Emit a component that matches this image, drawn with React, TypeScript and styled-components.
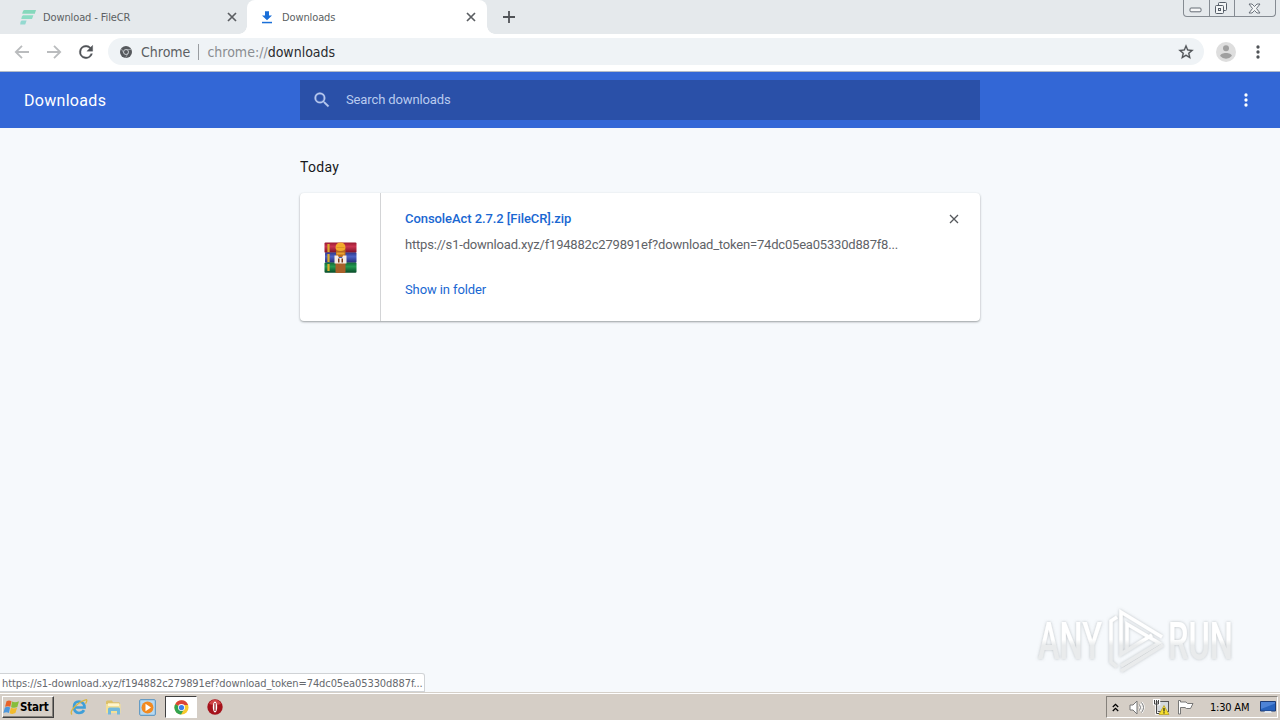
import React from "react";
import styled, { createGlobalStyle } from "styled-components";

const GlobalStyle = createGlobalStyle`
  * {
    box-sizing: border-box;
  }

  body {
    margin: 0;
    overflow: hidden;
    font-family: Roboto, "Liberation Sans", sans-serif;
  }

  svg {
    display: block;
    flex-shrink: 0;
  }
`;

const chromeFont = `"DejaVu Sans Condensed", "DejaVu Sans", sans-serif`;

interface CrossProps {
  size: number;
  weight: number;
  color: string;
}

const Cross: React.FC<CrossProps> = ({ size, weight, color }) => (
  <svg width={size} height={size} viewBox="0 0 10 10">
    <path d="M1 1L9 9M9 1L1 9" stroke={color} strokeWidth={weight} />
  </svg>
);

const Dots: React.FC<{ color: string; size: number }> = ({ color, size }) => (
  <svg width={size} height={size} viewBox="0 0 24 24" fill={color}>
    <circle cx="12" cy="6" r="2" />
    <circle cx="12" cy="12" r="2" />
    <circle cx="12" cy="18" r="2" />
  </svg>
);

const FileCrIcon = () => (
  <svg width="17" height="17" viewBox="0 0 17 17">
    <path d="M4.5 1H16l-1.2 3.8H2.2Q2.8 1.3 4.5 1z" fill="#86d8bc" />
    <path d="M3 6.2h10.4L12 10H1.3Q1.6 7 3 6.2z" fill="#8cdcc4" />
    <path d="M1.6 11.4h5L5.2 15.4H.2Q.2 12 1.6 11.4z" fill="#94d9d0" />
  </svg>
);

const DownloadIcon = () => (
  <svg width="12" height="13" viewBox="0 0 12 13" fill="#1a6fd8">
    <path d="M4 .3h4v4.3h3L6 9.3 1 4.6h3z" />
    <path d="M1 10.8h10v1.5H1z" />
  </svg>
);

const ArrowIcon: React.FC<{ flip?: boolean }> = ({ flip }) => (
  <svg width="16" height="16" viewBox="0 0 16 16">
    <path
      d="M15 8H2M8 1.8L1.8 8L8 14.2"
      fill="none"
      stroke="#babcbe"
      strokeWidth="1.8"
      transform={flip ? "rotate(180 8 8)" : undefined}
    />
  </svg>
);

const ReloadIcon = () => (
  <svg width="20" height="20" viewBox="0 0 24 24" fill="#505357" stroke="#505357" strokeWidth=".4">
    <path d="M17.65 6.35A7.96 7.96 0 0 0 12 4a8 8 0 1 0 7.73 10h-2.08A6 6 0 1 1 12 6c1.66 0 3.14.69 4.22 1.78L13 11h7V4l-2.35 2.35z" />
  </svg>
);

const PageIcon = () => (
  <svg width="12" height="12" viewBox="0 0 12 12">
    <circle cx="6" cy="6" r="6" fill="#56595d" />
    <circle cx="6" cy="6" r="2.5" fill="none" stroke="#d4d8dc" strokeWidth=".9" />
    <path d="M6 3.5h5.2M3.9 7.2L1.4 3M8.1 7.2l-2.5 4.5" stroke="#c4c8cc" strokeWidth=".6" />
  </svg>
);

const StarIcon = () => (
  <svg width="18" height="18" viewBox="0 0 24 24" fill="#4f5256" stroke="#4f5256" strokeWidth=".3">
    <path d="M22 9.24l-7.19-.62L12 2 9.19 8.63 2 9.24l5.46 4.73L5.82 21 12 17.27 18.18 21l-1.63-7.03L22 9.24zM12 15.4l-3.76 2.27 1-4.28-3.32-2.88 4.38-.38L12 6.1l1.71 4.04 4.38.38-3.32 2.88 1 4.28L12 15.4z" />
  </svg>
);

const AvatarIcon = () => (
  <svg width="20" height="20" viewBox="0 0 20 20">
    <circle cx="10" cy="10" r="10" fill="#dedede" />
    <circle cx="10" cy="6.3" r="3" fill="#a0a0a0" />
    <path d="M4.2 14c0-4 11.6-4 11.6 0q-2.4 2.8-5.8 2.8T4.2 14z" fill="#a0a0a0" />
  </svg>
);

const SearchIcon = () => (
  <svg width="20" height="20" viewBox="0 0 24 24" fill="#b6c8ee" stroke="#b6c8ee" strokeWidth=".3">
    <path d="M15.5 14h-.79l-.28-.27A6.47 6.47 0 0 0 16 9.5 6.5 6.5 0 1 0 9.5 16c1.61 0 3.09-.59 4.23-1.57l.27.28v.79l5 4.99L20.49 19l-4.99-5zm-6 0a4.5 4.5 0 1 1 0-9 4.5 4.5 0 0 1 0 9z" />
  </svg>
);

const WinRarIcon = () => (
  <svg width="33" height="31" viewBox="0 0 33 31">
    <defs>
      <linearGradient id="red" x2="0" y2="1">
        <stop stopColor="#9a1a30" />
        <stop offset=".4" stopColor="#c93450" />
        <stop offset="1" stopColor="#7c1027" />
      </linearGradient>
      <linearGradient id="blue" x2="0" y2="1">
        <stop stopColor="#30378a" />
        <stop offset=".4" stopColor="#4c62c4" />
        <stop offset="1" stopColor="#262b78" />
      </linearGradient>
      <linearGradient id="green" x2="0" y2="1">
        <stop stopColor="#12663a" />
        <stop offset=".4" stopColor="#239a50" />
        <stop offset="1" stopColor="#084a28" />
      </linearGradient>
    </defs>
    <rect x=".5" y=".5" width="32" height="10.2" rx="1" fill="url(#red)" />
    <rect x="1" y="10.5" width="31.5" height="10.2" rx="1" fill="url(#blue)" />
    <rect x=".5" y="20.5" width="32" height="10.2" rx="1" fill="url(#green)" />
    <path d="M4.5 2v8M4.5 12v8M4.5 22v7" stroke="#dcae2c" strokeWidth="2.2" />
    <rect x="11.5" y="20" width="10" height="11" rx="1" fill="#a8602a" />
    <path d="M12 7h9.5v8H12z" fill="#b8691f" />
    <path d="M11.5 6Q11.5 .5 16.5 .5T21.500 6q-.5 3-5 3t-5-3z" fill="#f3aa2b" />
    <path d="M12.5 5.5h8" stroke="#d98f22" strokeWidth=".8" />
    <path d="M12.500 11.500h8" stroke="#eda42f" strokeWidth="2" />
    <path d="M10.500 21.500v-8h3.500l1 2.500h3l1-2.500h3.500v8z" fill="#f5ece6" />
    <path d="M14 16.500h1.500v4H14zM17.500 16.500H19v4h-1.500z" fill="#793516" />
  </svg>
);

const WindowsFlag = () => (
  <svg width="17" height="17" viewBox="0 0 17 16">
    <path d="M3.5 1.7Q6 .3 8.5 1.7L7.3 7.3Q5 6 2.1 7.3z" fill="#e8632a" />
    <path d="M9 2Q12 3.5 16 1.8L14.3 7.5q-3 1.5-6.2.2z" fill="#86bd3c" />
    <path d="M1.9 8q2.8-1.3 5.2-.1L5.9 13.5Q3.5 12.2.4 13.500z" fill="#4d97dc" />
    <path d="M7.9 8.3q3 1.3 6.2-.1l-1.7 5.4q-3 1.5-5.8.1z" fill="#f2bb2d" />
  </svg>
);

const ExplorerIcon = () => (
  <svg width="18" height="18" viewBox="0 0 18 18">
    <path
      d="M14 12.2Q12.5 15 9 15q-5-.5-5-6t5-5.5q5.5.5 5.5 6H5"
      fill="none"
      stroke="#3f9fd8"
      strokeWidth="2.7"
    />
    <path
      d="M2 16.5Q-.5 14 5 8.5T16.5 1.700q1 1-1 4"
      fill="none"
      stroke="#d9b641"
      strokeWidth="1.3"
    />
  </svg>
);

const FolderIcon = () => (
  <svg width="17" height="17" viewBox="0 0 17 17">
    <path d="M1 3q0-1.5 1.5-1.5H7l1 1.7h6.5V6H1z" fill="#dcc069" />
    <path d="M1 5h14.5v9H1z" fill="#f3e096" />
    <path d="M3 4.3h11V7H3z" fill="#fff5cc" />
    <path d="M3 15.5V10q0-1.5 1.5-1.5h9Q15 8.5 15 10v5.5h-3V12H6v3.5z" fill="#72b9dc" />
  </svg>
);

const PlayerIcon = () => (
  <svg width="17" height="17" viewBox="0 0 17 17">
    <rect x=".7" y=".7" width="15.6" height="15.6" rx="1" fill="#b7d9f1" stroke="#4f8fc0" />
    <circle cx="8.5" cy="8.5" r="6" fill="#f28a20" />
    <path d="M6.5 4.8v7.4l5.5-3.7z" fill="#fff" />
  </svg>
);

const ChromeIcon = () => (
  <svg width="15" height="15" viewBox="0 0 16 16">
    <circle cx="8" cy="8" r="7.5" fill="#f7c92d" />
    <path d="M8 8L1.3 4.5A7.5 7.5 0 0 1 15 5.2H8z" fill="#dc4437" />
    <path d="M8 8L1.3 4.5A7.5 7.5 0 0 0 7.5 15.5L10.8 9.5z" fill="#32a350" />
    <circle cx="8" cy="8" r="3.7" fill="#fff" />
    <circle cx="8" cy="8" r="2.8" fill="#3d7eea" />
  </svg>
);

const OperaIcon = () => (
  <svg width="16" height="16" viewBox="0 0 16 16">
    <circle cx="8" cy="8" r="7.7" fill="#a5121b" />
    <path d="M2 5Q4 .8 8 .8T14 5Q8 7 2 5z" fill="#cf4446" />
    <ellipse cx="8" cy="8" rx="2.2" ry="5.4" fill="#fff" />
    <path d="M8 4v8" stroke="#8d1117" strokeWidth="1.2" />
  </svg>
);

const ChevronsIcon = () => (
  <svg width="7" height="9" viewBox="0 0 7 9" fill="none" stroke="#000" strokeWidth="1.3">
    <path d="M.8 4L3.5 1.3 6.2 4M.8 8L3.5 5.3 6.2 8" />
  </svg>
);

const VolumeIcon = () => (
  <svg width="17" height="15" viewBox="0 0 17 15" fill="none" stroke="#777">
    <path d="M1 5h3l4-4v13l-4-4H1z" fill="#fff" />
    <path d="M10.5 4.5q2 3 0 6M12.5 2.5q4 5 0 10" stroke="#fff" strokeWidth="2.5" />
    <path d="M10.5 4.5q2 3 0 6M12.5 2.5q4 5 0 10" />
  </svg>
);

const NetworkIcon = () => (
  <svg width="17" height="17" viewBox="0 0 17 17">
    <rect x="4.5" y="2.5" width="11" height="10" fill="#d4d9dc" stroke="#555" />
    <path d="M1 1h5v4H1zM3.5 5v9.5H6" fill="none" stroke="#fff" strokeWidth="2.5" />
    <path d="M1.5 1v4h4V1M3.5 1v13.5H6" fill="none" stroke="#444" />
    <path d="M11 6.5l5 9H6z" fill="#f6df2d" stroke="#b39b18" strokeWidth=".7" />
    <path d="M11 9v3.5M11 13.3v1.2" stroke="#222" strokeWidth="1.2" />
  </svg>
);

const FlagIcon = () => (
  <svg width="17" height="16" viewBox="0 0 17 16">
    <path
      d="M1.5 1.5h2V3H9l1.5 1.5H16L13.5 9.5H9.5L8 8.5H3.5V15h-2z"
      fill="#fff"
      stroke="#6b6b6b"
      strokeWidth=".9"
    />
  </svg>
);

const DesktopIcon = () => (
  <svg width="16" height="14" viewBox="0 0 16 14">
    <path d="M.5 1.5h15V11H.5z" fill="#2863bd" stroke="#1d3c76" />
    <path d="M1 2h14v1.5L1 9z" fill="#4d83d6" />
    <path d="M5 11h6l1 2H4z" fill="#dfe5ec" />
  </svg>
);

const MinimizeGlyph = () => (
  <svg width="13" height="6" viewBox="0 0 13 6">
    <rect x="1" y="1" width="11" height="3.8" rx="1" fill="#f6f7f8" stroke="#656c75" />
  </svg>
);

const RestoreGlyph = () => (
  <svg width="14" height="14" viewBox="0 0 14 14" fill="#f3f5f6" stroke="#565e68">
    <rect x="4.5" y="1.5" width="8" height="8" rx="1" />
    <rect x="1.5" y="4.5" width="8" height="8" rx="1" />
    <rect x="4.5" y="7.5" width="2" height="2" />
  </svg>
);

const CloseGlyph = () => (
  <svg width="13" height="11" viewBox="0 0 13 11">
    <path
      d="M1 1h3l2.5 2.5L9 1h3L8.5 5.5 12 10H9L6.5 7.5 4 10H1l3.5-4.5z"
      fill="#f3f5f6"
      stroke="#5d656f"
      strokeWidth=".9"
    />
  </svg>
);

const AnyRunLogo = () => (
  <svg width="244" height="80" viewBox="0 0 244 80">
    <defs>
      <linearGradient id="fade" x1="0" y1="0" x2="0" y2="72" gradientUnits="userSpaceOnUse">
        <stop offset=".48" stopColor="#fff" />
        <stop offset=".56" stopColor="#e9ebec" />
      </linearGradient>
      <filter id="glow" x="-10%" y="-20%" width="120%" height="140%">
        <feDropShadow dx="0" dy="0" stdDeviation="1.5" floodColor="#7d8286" floodOpacity=".5" />
      </filter>
    </defs>
    <g filter="url(#glow)" fill="url(#fade)">
      <text x="5" y="54" textLength="64" lengthAdjust="spacingAndGlyphs" fontSize="52" fontWeight="500">
        ANY
      </text>
      <text x="135" y="54" textLength="65" lengthAdjust="spacingAndGlyphs" fontSize="52" fontWeight="500">
        RUN
      </text>
      <g fill="none" stroke="url(#fade)" strokeWidth="3.5">
        <path d="M84 12l-6 4v41l6 5" />
        <path d="M129 32L88 7v42l31-19" />
        <path d="M94 44V19l32 19-38 23" />
        <path d="M88 66l42-26" />
      </g>
    </g>
  </svg>
);

const App: React.FC = () => {
  return (
    <Screen>
      <GlobalStyle />
      <TabStrip>
        <Tab>
          <FileCrIcon />
          <TabTitle $gap={6}>Download - FileCR</TabTitle>
          <Cross size={10} weight={1.7} color="#5b5e62" />
        </Tab>
        <Tab $active>
          <DownloadIcon />
          <TabTitle $gap={9}>Downloads</TabTitle>
          <Cross size={10} weight={1.7} color="#5b5e62" />
        </Tab>
        <NewTab>
          <svg width="12" height="12" viewBox="0 0 12 12">
            <path d="M6 0v12M0 6h12" stroke="#505357" strokeWidth="1.8" />
          </svg>
        </NewTab>
        <WindowButtons>
          <WindowButton $width={25} $drop={4}>
            <MinimizeGlyph />
          </WindowButton>
          <WindowButton $width={25}>
            <RestoreGlyph />
          </WindowButton>
          <WindowButton $width={41}>
            <CloseGlyph />
          </WindowButton>
        </WindowButtons>
      </TabStrip>
      <Toolbar>
        <ArrowIcon />
        <ArrowIcon flip />
        <ReloadIcon />
        <Omnibox>
          <PageIcon />
          <Origin>Chrome</Origin>
          <Address>
            chrome://<b>downloads</b>
          </Address>
          <StarIcon />
        </Omnibox>
        <AvatarIcon />
        <Dots color="#505357" size={20} />
      </Toolbar>
      <Header>
        <Title>Downloads</Title>
        <SearchBox>
          <SearchIcon />
          <Placeholder>Search downloads</Placeholder>
        </SearchBox>
        <HeaderMenu>
          <Dots color="#fff" size={20} />
        </HeaderMenu>
      </Header>
      <Page>
        <Day>Today</Day>
        <Card>
          <FileIcon>
            <WinRarIcon />
          </FileIcon>
          <Details>
            <FileName>ConsoleAct 2.7.2 [FileCR].zip</FileName>
            <FileUrl>https://s1-download.xyz/f194882c279891ef?download_token=74dc05ea05330d887f8...</FileUrl>
            <ShowLink>Show in folder</ShowLink>
          </Details>
          <Remove>
            <Cross size={10} weight={1.3} color="#55585c" />
          </Remove>
        </Card>
        <StatusBubble>
          <span>https://s1-download.xyz/f194882c279891ef?download_token=74dc05ea05330d887f...</span>
        </StatusBubble>
        <Watermark>
          <AnyRunLogo />
        </Watermark>
      </Page>
      <Taskbar>
        <StartButton>
          <WindowsFlag />
          <span>Start</span>
        </StartButton>
        <Launchers>
          <Launcher>
            <ExplorerIcon />
          </Launcher>
          <Launcher>
            <FolderIcon />
          </Launcher>
          <Launcher>
            <PlayerIcon />
          </Launcher>
          <Launcher $active>
            <ChromeIcon />
          </Launcher>
          <Launcher>
            <OperaIcon />
          </Launcher>
        </Launchers>
        <Tray>
          <ChevronsIcon />
          <VolumeIcon />
          <NetworkIcon />
          <FlagIcon />
          <Clock>1:30 AM</Clock>
          <DesktopIcon />
        </Tray>
      </Taskbar>
    </Screen>
  );
};

const Screen = styled.div`
  display: flex;
  flex-direction: column;
  width: 1280px;
  height: 720px;
  overflow: hidden;
  background-color: #f6f9fc;
`;

const TabStrip = styled.div`
  display: flex;
  height: 34px;
  background-color: #e5e9ec;
`;

const Tab = styled.div<{ $active?: boolean }>`
  position: relative;
  display: flex;
  align-items: center;
  width: ${p => (p.$active ? 240 : 247)}px;
  height: 34px;
  padding: ${p => (p.$active ? "0 11px 0 14px" : "0 10px 0 20px")};
  border-radius: 8px 8px 0 0;
  background-color: ${p => (p.$active ? "#fff" : "transparent")};

  /* curved feet on both sides of the active tab */
  &::before,
  &::after {
    content: "";
    display: ${p => (p.$active ? "block" : "none")};
    position: absolute;
    bottom: 0;
    width: 8px;
    height: 8px;
  }

  &::before {
    left: -8px;
    background: radial-gradient(circle at 0 0, transparent 7.5px, #fff 8px);
  }

  &::after {
    right: -8px;
    background: radial-gradient(circle at 100% 0, transparent 7.5px, #fff 8px);
  }
`;

const TabTitle = styled.div<{ $gap: number }>`
  flex: 1;
  margin-left: ${p => p.$gap}px;
  font-family: ${chromeFont};
  font-size: 11px;
  letter-spacing: -0.12px;
  color: #5c5f63;
  white-space: nowrap;
`;

const NewTab = styled.div`
  display: flex;
  align-items: center;
  padding-left: 16px;
`;

const WindowButtons = styled.div`
  display: flex;
  height: 17px;
  margin-left: auto;
  margin-right: 4px;
  border: 1px solid #858b92;
  border-top: 0;
  border-radius: 0 0 4px 4px;
`;

const WindowButton = styled.div<{ $width: number; $drop?: number }>`
  display: flex;
  align-items: center;
  justify-content: center;
  width: ${p => p.$width}px;
  padding-top: ${p => p.$drop || 0}px;
  padding-right: 2px;

  & + & {
    border-left: 1px solid #858b92;
  }
`;

const Toolbar = styled.div`
  display: flex;
  align-items: center;
  height: 38px;
  padding: 0 12px 2px 14px;
  border-bottom: 1px solid #b4bcc8;
  background-color: #fff;

  > svg + svg {
    margin-left: 16px;
  }

  > svg:nth-child(3) {
    margin-left: 14px;
  }

  > svg:last-child {
    margin-left: 12px;
  }
`;

const Omnibox = styled.div`
  display: flex;
  align-items: center;
  width: 1096px;
  height: 27px;
  margin: 0 12px;
  padding: 0 9px 0 12px;
  border-radius: 14px;
  background-color: #eff3f6;
  font-family: ${chromeFont};
  font-size: 14px;
  white-space: nowrap;
`;

const Origin = styled.div`
  margin-left: 9px;
  padding-right: 8px;
  border-right: 1px solid #9a9da1;
  color: #5c5f63;
  line-height: 16px;
`;

const Address = styled.div`
  flex: 1;
  margin-left: 8px;
  color: #8a8d91;

  b {
    font-weight: normal;
    color: #2a2c2f;
  }
`;

const Header = styled.div`
  display: grid;
  grid-template-columns: 300px 680px 1fr;
  align-items: center;
  height: 56px;
  background-color: #3367d6;
`;

const Title = styled.div`
  padding-left: 24px;
  font-size: 16px;
  letter-spacing: 0.3px;
  color: #fff;
`;

const SearchBox = styled.div`
  display: flex;
  align-items: center;
  height: 40px;
  padding-left: 12px;
  background-color: #2a50a8;
`;

const Placeholder = styled.div`
  margin: 0 0 2px 14px;
  font-size: 13px;
  letter-spacing: -0.12px;
  color: #b9cbef;
`;

const HeaderMenu = styled.div`
  justify-self: end;
  padding-right: 24px;
`;

const Page = styled.div`
  position: relative;
  flex: 1;
  padding: 30px 300px 0;
`;

const Day = styled.div`
  height: 35px;
  font-size: 14px;
  line-height: 19px;
  letter-spacing: 0.3px;
  color: #17191c;
`;

const Card = styled.div`
  display: flex;
  height: 128px;
  border-radius: 4px;
  background-color: #fff;
  box-shadow: 0 1px 2px rgba(60, 64, 67, 0.4), 0 1px 3px rgba(60, 64, 67, 0.12);
`;

const FileIcon = styled.div`
  display: flex;
  align-items: center;
  justify-content: center;
  width: 81px;
  border-right: 1px solid #d3d4d6;
`;

const Details = styled.div`
  display: flex;
  flex-direction: column;
  flex: 1;
  padding: 17px 0 0 24px;
  font-size: 13px;
  line-height: 18px;
  white-space: nowrap;
`;

const FileName = styled.div`
  font-weight: 500;
  letter-spacing: -0.07px;
  color: #1967d2;
`;

const FileUrl = styled.div`
  margin-top: 8px;
  letter-spacing: -0.19px;
  color: #5f6368;
`;

const ShowLink = styled.div`
  margin-top: 27px;
  letter-spacing: -0.1px;
  color: #1967d2;
`;

const Remove = styled.div`
  padding: 21px 21px 0 0;
`;

const StatusBubble = styled.div`
  position: absolute;
  left: 0;
  bottom: 0;
  width: 425px;
  height: 19px;
  padding-left: 2px;
  border: 1px solid #d0d3d6;
  border-left: 0;
  border-radius: 0 3px 0 0;
  background-color: #fff;
  font-family: ${chromeFont};
  font-size: 11px;
  line-height: 19px;
  letter-spacing: -0.09px;
  color: #66696e;
  white-space: nowrap;
`;

const Watermark = styled.div`
  position: absolute;
  right: 3px;
  bottom: 7px;
  font-family: Roboto, sans-serif;
`;

const Taskbar = styled.div`
  display: flex;
  align-items: center;
  height: 28px;
  padding: 2px 2px 1px;
  border-top: 1px solid #d5d0c9;
  box-shadow: inset 0 1px 0 #fff;
  background-color: #d5cec6;
`;

const StartButton = styled.div`
  display: flex;
  align-items: center;
  width: 52px;
  height: 22px;
  border: 1px solid;
  border-color: #fff #404040 #404040 #fff;
  box-shadow: inset -1px -1px 0 #85817b;
  font-family: ${chromeFont};
  font-size: 11.5px;
  font-weight: bold;
  letter-spacing: -0.2px;
`;

const Launchers = styled.div`
  display: flex;
  margin-left: 9px;
  gap: 2px;
`;

const Launcher = styled.div<{ $active?: boolean }>`
  display: flex;
  align-items: center;
  justify-content: center;
  width: 32px;
  height: 22px;
  border: 1px solid transparent;
  ${p =>
    p.$active &&
    `
    border-color: #404040 #fff #fff #404040;
    background-color: #fff;
  `}
`;

const Tray = styled.div`
  display: flex;
  align-items: center;
  width: 172px;
  height: 22px;
  margin-left: auto;
  padding: 0 1px 0 5px;
  border: 1px solid;
  border-color: #85817b #fff #fff #85817b;

  > svg:nth-child(2) {
    margin-left: 10px;
  }

  > svg:nth-child(3),
  > svg:nth-child(4) {
    margin-left: 7px;
  }
`;

const Clock = styled.div`
  flex: 1;
  padding-left: 16px;
  font-family: ${chromeFont};
  font-size: 11px;
  letter-spacing: -0.2px;
  white-space: nowrap;
`;

export default App;
